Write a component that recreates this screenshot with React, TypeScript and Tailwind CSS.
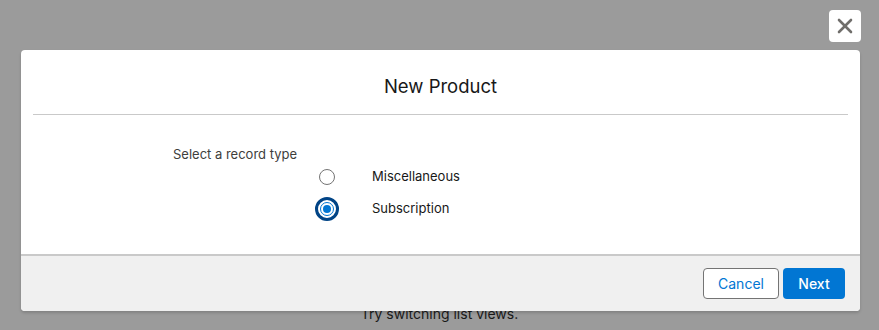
import { X } from 'lucide-react';

const font = { fontFamily: 'Inter, "Noto Sans", sans-serif' };

function Radio({ checked, label }: { checked?: boolean; label: string }) {
  return (
    <label className="flex items-center h-[32px]">
      <span className="flex w-[100px] justify-end pr-[33px]">
        {checked ? (
          <span className="flex h-[24px] w-[24px] items-center justify-center rounded-full border-[3px] border-[#014486] bg-white">
            <span className="flex h-[14px] w-[14px] items-center justify-center rounded-full border border-[#0176d3] bg-white">
              <span className="h-[8px] w-[8px] rounded-full bg-[#0176d3]" />
            </span>
          </span>
        ) : (
          <span className="mx-[4px] h-[16px] w-[16px] rounded-full border border-[#747474] bg-white" />
        )}
      </span>
      <span className="text-[13px] text-[#181818]">{label}</span>
    </label>
  );
}

export default function App() {
  return (
    <div className="relative h-[330px] w-[879px] overflow-hidden bg-[#9b9b9b]" style={font}>
      {/* contenido de la página detrás del modal */}
      <div className="pt-[303px] text-center text-[14px] text-[#1a1a1a]">
        Try switching list views.
      </div>

      {/* modal */}
      <div className="absolute inset-0">
        <div className="flex justify-end pr-[18px] pt-[10px]">
          <button
            type="button"
            className="flex h-[32px] w-[32px] items-center justify-center rounded-[4px] bg-white text-[#706e6b]"
          >
            <X size={24} strokeWidth={2.6} />
          </button>
        </div>

        <div className="ml-[21px] mt-[8px] w-[839px] overflow-hidden rounded-[4px] bg-white shadow-[0_2px_3px_rgba(0,0,0,0.16)]">
          <div className="mx-[12px] flex h-[65px] items-center justify-center border-b border-[#c9c9c9]">
            <h2 className="pt-[9px] text-[18.5px] text-[#181818]">New Product</h2>
          </div>

          <div className="h-[139px] pl-[152px] pt-[32px]">
            <div className="text-[13px] leading-[14px] text-[#3e3e3c]">Select a record type</div>
            <div className="pl-[99px]">
              <Radio label="Miscellaneous" />
              <Radio checked label="Subscription" />
            </div>
          </div>

          <div className="flex h-[57px] items-center justify-end gap-[4px] border-t-2 border-[#c9c9c9] bg-[#f0f0f0] pr-[15px]">
            <button
              type="button"
              className="h-[31px] w-[76px] rounded-[4px] border border-[#747474] bg-white text-[14px] text-[#0176d3]"
            >
              Cancel
            </button>
            <button
              type="button"
              className="h-[31px] w-[62px] rounded-[4px] bg-[#0176d3] text-[14px] font-medium text-white"
            >
              Next
            </button>
          </div>
        </div>
      </div>
    </div>
  );
}
